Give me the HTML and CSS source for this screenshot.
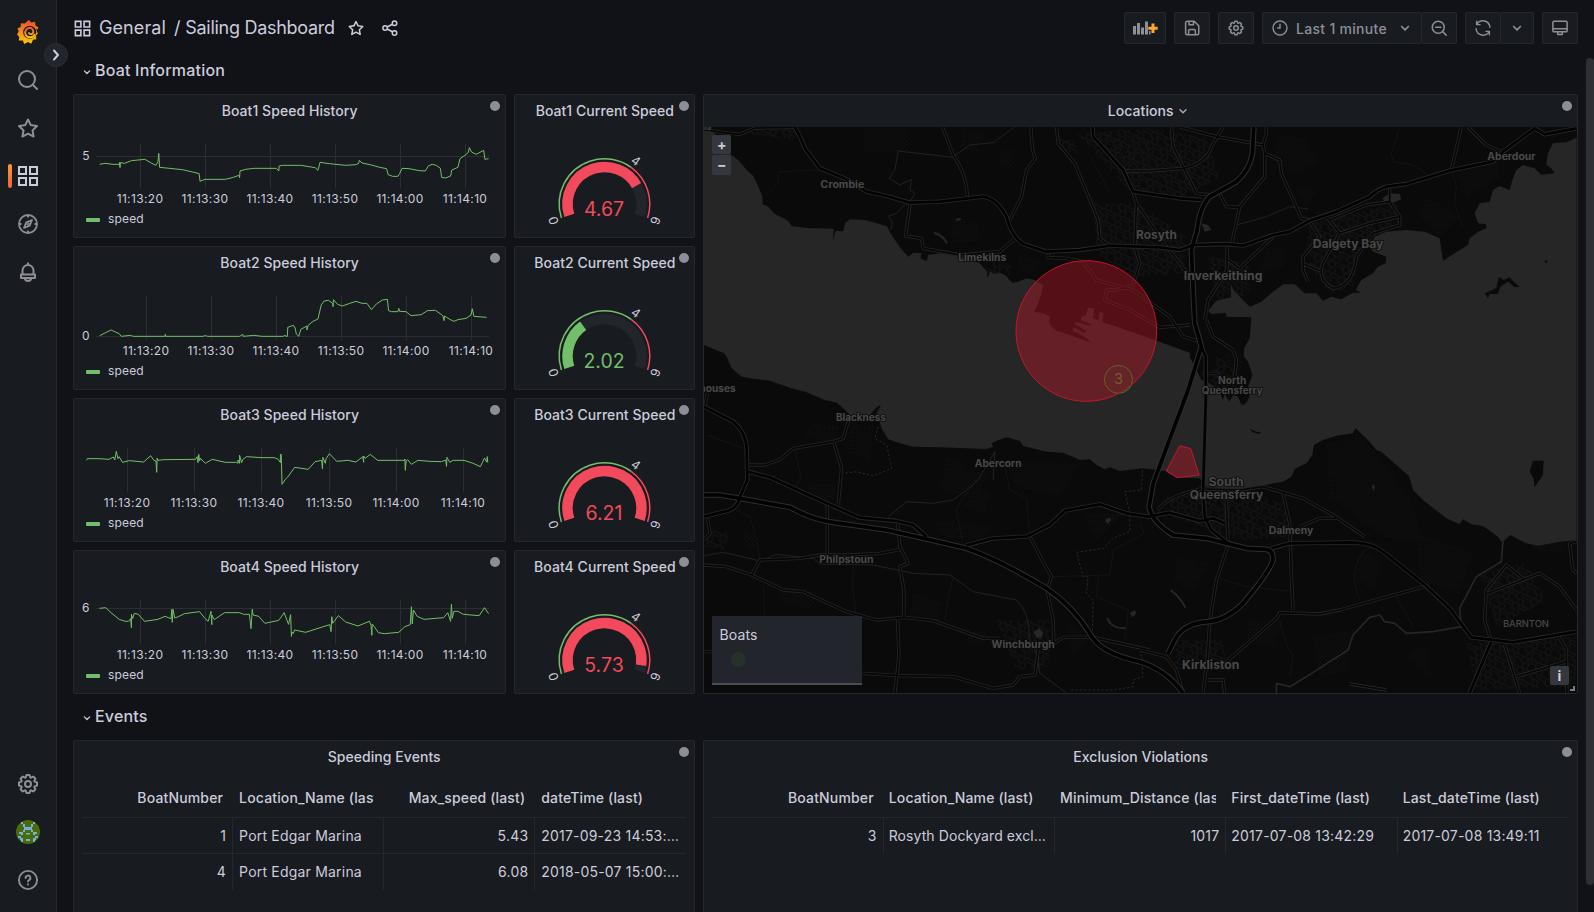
FILE: index.html
```html
<!DOCTYPE html>
<html lang="en">
<head>
<meta charset="utf-8">
<title>Sailing Dashboard</title>
<link rel="stylesheet" href="styles.css">
</head>
<body>
<svg class="defs" width="0" height="0">
  <defs>
    <symbol id="i-apps" viewBox="0 0 24 24"><path fill="none" stroke="currentColor" stroke-width="2" d="M3 3h7v7H3zM14 3h7v7h-7zM3 14h7v7H3zM14 14h7v7h-7z"/></symbol>
    <symbol id="i-star" viewBox="0 0 24 24"><path fill="currentColor" d="M22,9.67A1,1,0,0,0,21.14,9l-5.69-.83L12.9,3a1,1,0,0,0-1.8,0L8.55,8.16,2.86,9a1,1,0,0,0-.81.68,1,1,0,0,0,.25,1l4.13,4-1,5.68A1,1,0,0,0,6.9,21.44L12,18.77l5.1,2.67a.93.93,0,0,0,.46.12,1,1,0,0,0,.59-.19,1,1,0,0,0,.4-1l-1-5.68,4.13-4A1,1,0,0,0,22,9.67Zm-6.15,4a1,1,0,0,0-.29.88l.72,4.2-3.76-2a1.06,1.06,0,0,0-.94,0l-3.76,2,.72-4.2a1,1,0,0,0-.29-.88l-3-3,4.21-.61a1,1,0,0,0,.76-.55L12,5.7l1.88,3.82a1,1,0,0,0,.76.55l4.21.61Z"/></symbol>
    <symbol id="i-gear" viewBox="0 0 24 24"><path fill="currentColor" d="M21.32,9.55l-1.89-.63.89-1.78A1,1,0,0,0,20.13,6L18,3.87a1,1,0,0,0-1.15-.19l-1.78.89-.63-1.89A1,1,0,0,0,13.5,2h-3a1,1,0,0,0-.95.68L8.92,4.57,7.14,3.68A1,1,0,0,0,6,3.87L3.87,6a1,1,0,0,0-.19,1.15l.89,1.78-1.89.63A1,1,0,0,0,2,10.5v3a1,1,0,0,0,.68.95l1.89.63-.89,1.78A1,1,0,0,0,3.87,18L6,20.13a1,1,0,0,0,1.15.19l1.78-.89.63,1.89a1,1,0,0,0,.95.68h3a1,1,0,0,0,.95-.68l.63-1.89,1.78.89A1,1,0,0,0,18,20.13L20.13,18a1,1,0,0,0,.19-1.15l-.89-1.78,1.89-.63A1,1,0,0,0,22,13.5v-3A1,1,0,0,0,21.32,9.55ZM20,12.78l-1.2.4A2,2,0,0,0,17.64,16l.57,1.14-1.1,1.1L16,17.64a2,2,0,0,0-2.79,1.16l-.4,1.2H11.22l-.4-1.2A2,2,0,0,0,8,17.64l-1.14.57-1.1-1.1L6.36,16A2,2,0,0,0,5.2,13.18L4,12.78V11.22l1.2-.4A2,2,0,0,0,6.36,8L5.79,6.89l1.1-1.1L8,6.36A2,2,0,0,0,10.82,5.2l.4-1.2h1.56l.4,1.2A2,2,0,0,0,16,6.36l1.14-.57,1.1,1.1L17.64,8a2,2,0,0,0,1.16,2.79l1.2.4ZM12,8a4,4,0,1,0,4,4A4,4,0,0,0,12,8Zm0,6a2,2,0,1,1,2-2A2,2,0,0,1,12,14Z"/></symbol>
    <symbol id="i-down" viewBox="0 0 24 24"><path fill="none" stroke="currentColor" stroke-width="2.2" stroke-linecap="round" stroke-linejoin="round" d="M7.5 10l4.5 4.5 4.5-4.5"/></symbol>
  </defs>
</svg>

<nav class="sidebar">
  <div class="nav-group">
    <a class="nav-item logo"><svg width="24" height="26" viewBox="0 0 24 26">
      <defs><linearGradient id="lg" x1="0" y1="0" x2="0" y2="1"><stop offset=".1" stop-color="#f05a28"/><stop offset="1" stop-color="#fbca0a"/></linearGradient></defs>
      <path fill="url(#lg)" d="M12.7 1l2.5 2.6 3.9-.8.4 3.6 3.1 2-1.3 2.3.8 3.6-2 2.3.2 3.6-3.3.5-1.8 4-3.2-1.7-3.8 2-1.3-3.4-4.1-.2.4-3.4L1 15.200l1.700-2.600L1.500 9.300l3.100-1.200.3-3.800 3.800.2z"/>
      <circle cx="13.700" cy="13.200" r="6.500" fill="#181b1f"/>
      <path fill="none" stroke="url(#lg)" stroke-width="1.900" stroke-linecap="round" d="M18.800 15.500a5.200 5.200 0 0 1-9.400-.4a4.900 4.900 0 0 1 4.400-6.300a4 4 0 0 1 3.500 4.500a2.400 2.400 0 0 1-4.300.8"/>
      <path fill="#181b1f" d="M20 9.500l3.500 2.500-2 2z"/>
    </svg></a>
    <a class="nav-item"><svg width="24" height="24" viewBox="0 0 24 24" fill="none" stroke="currentColor" stroke-width="2" stroke-linecap="round"><circle cx="11" cy="11" r="8"/><path d="M17 17l4 4"/></svg></a>
    <a class="nav-item"><svg width="24" height="24"><use href="#i-star"/></svg></a>
    <a class="nav-item active"><svg width="24" height="24"><use href="#i-apps"/></svg></a>
    <a class="nav-item"><svg width="24" height="24" viewBox="0 0 24 24" fill="none" stroke="currentColor" stroke-width="1.800" stroke-linejoin="round"><circle cx="12" cy="12" r="9"/><path d="M16 8l-2.300 5.700L8 16l2.300-5.700z"/><path d="M12 3v2.500M12 18.500V21M3 12h2.500M18.500 12H21M10.800 13.200l2.400-2.400"/></svg></a>
    <a class="nav-item"><svg width="24" height="24" viewBox="0 0 24 24" fill="none" stroke="currentColor" stroke-width="2" stroke-linejoin="round"><path d="M6.500 14v-3.500a5.500 5.500 0 0 1 11 0V14M12 5V2.500M5 14.500h14V18H5zM8.800 18.500a3.300 3.300 0 0 0 6.400 0"/></svg></a>
  </div>
  <div class="nav-group nav-bottom">
    <a class="nav-item"><svg width="24" height="24"><use href="#i-gear"/></svg></a>
    <a class="nav-item"><svg width="24" height="24" viewBox="0 0 24 24"><clipPath id="av"><circle cx="12" cy="12" r="12"/></clipPath><g clip-path="url(#av)"><path fill="#4d6a08" d="M0 0h24v24H0z"/><path fill="#6fb1e0" d="M5 2h2v2H5zM17 2h2v2h-2zM7 4h2v3H7zM15 4h2v3h-2zM8 7h8v3H8zM7 10h2v2H7zM15 10h2v2h-2zM3 12h4v3H5v-1H3zM17 12h4v2h-2v1h-2zM10 13h4v1.500h-4zM2 16h3v2h2v2H4v-2H2zM19 16h3v2h-2v2h-3v-2h2zM5 20h2v2H5zM17 20h2v2h-2zM10 19h4v2h-4z"/></g></svg></a>
    <a class="nav-item"><svg width="24" height="24" viewBox="0 0 24 24" fill="none" stroke="currentColor" stroke-width="1.900" stroke-linecap="round"><circle cx="12" cy="12" r="9.100"/><path d="M9.600 10a2.400 2.400 0 1 1 3.500 2.100q-1.100.6-1.100 1.400M12 16.300v.3"/></svg></a>
  </div>
  <span class="nav-toggle"><svg width="24" height="24" viewBox="0 0 24 24" fill="none" stroke="#ccccdc" stroke-width="2" stroke-linecap="round" stroke-linejoin="round"><path d="M10 7.500l4 4.500-4 4.500"/></svg></span>
</nav>

<main class="main">
  <header class="topbar">
    <div class="crumbs">
      <svg class="ic-apps" width="19" height="19"><use href="#i-apps"/></svg>
      <span class="crumb folder">General</span><span class="crumb sep">/</span><span class="crumb">Sailing Dashboard</span>
      <svg class="ic-star" width="18" height="18"><use href="#i-star"/></svg>
      <svg class="ic-share" width="18" height="18" viewBox="0 0 24 24" fill="none" stroke="currentColor" stroke-width="2"><circle cx="5.500" cy="12" r="3"/><circle cx="18" cy="5.500" r="3"/><circle cx="18" cy="18.500" r="3"/><path d="M8.200 10.700l7-3.700M8.200 13.300l7 3.700"/></svg>
    </div>
    <div class="tools">
      <button class="btn add"><svg width="26" height="16" viewBox="0 0 26 16"><path fill="#8e8e99" d="M1 6h3v8.500H1zM5 3h3v11.500H5zM9 7.500h3v7H9zM13 1.500h3v13h-3z"/><path fill="#8e8e99" d="M17 11h1.500v3.500H17z"/><path fill="#ffa630" d="M19.500 3.500h3v3.200h3.200v3h-3.200v3.200h-3V9.700h-3.200v-3h3.200z"/></svg></button>
      <button class="btn"><svg width="18" height="18" viewBox="0 0 24 24" fill="none" stroke="currentColor" stroke-width="2" stroke-linejoin="round"><path d="M3.500 5a2 2 0 0 1 2-2H15l6 6v10a2 2 0 0 1-2 2H5.500a2 2 0 0 1-2-2zM8 3v4.500h6V3.500M7.500 21v-5.500a1.500 1.500 0 0 1 1.500-1.500h6a1.500 1.500 0 0 1 1.500 1.500V21"/></svg></button>
      <button class="btn"><svg width="18" height="18"><use href="#i-gear"/></svg></button>
      <div class="btn-group">
        <button class="btn time"><svg width="18" height="18" viewBox="0 0 24 24" fill="none" stroke="currentColor" stroke-width="1.900" stroke-linecap="round"><circle cx="12" cy="12" r="9.300"/><path d="M12 7v5H9"/></svg><span>Last 1 minute</span><svg width="18" height="18"><use href="#i-down"/></svg></button>
        <button class="btn"><svg width="18" height="18" viewBox="0 0 24 24" fill="none" stroke="currentColor" stroke-width="2" stroke-linecap="round"><circle cx="11" cy="11" r="8"/><path d="M17 17l4.500 4.500M7.500 11h7"/></svg></button>
      </div>
      <div class="btn-group">
        <button class="btn"><svg width="18" height="18" viewBox="0 0 24 24" fill="none" stroke="currentColor" stroke-width="1.900" stroke-linecap="round" stroke-linejoin="round"><path d="M3.500 3v4.500H8M3.800 7.300A9.300 9.300 0 0 1 21.200 11M20.500 21v-4.500H16M20.200 16.700A9.300 9.300 0 0 1 2.800 13"/></svg></button>
        <button class="btn arrow"><svg width="18" height="18"><use href="#i-down"/></svg></button>
      </div>
      <button class="btn"><svg width="18" height="18" viewBox="0 0 24 24" fill="none" stroke="currentColor" stroke-width="2" stroke-linejoin="round"><path d="M2.500 4.500a1.500 1.500 0 0 1 1.500-1.500h16a1.500 1.500 0 0 1 1.500 1.500v11a1.500 1.500 0 0 1-1.500 1.500H4a1.500 1.500 0 0 1-1.500-1.500zM2.500 13h19M9 17v3.500h6V17"/></svg></button>
    </div>
  </header>

  <div class="grid">
    <h2 class="row-title"><svg width="14" height="14"><use href="#i-down"/></svg>Boat Information</h2>

    <section class="panel history r1"><h3>Boat1 Speed History</h3><i class="dot"></i>
      <svg class="plot" viewBox="74 127 431 78">
        <path class="gl" d="M140.500 143.500V188.500M205.500 143.500V188.500M270.500 143.500V188.500M335.500 143.500V188.500M400.500 143.500V188.500M465.500 143.500V188.500M96 156.500H489"/>
        <g class="ln" transform="translate(60 90) scale(.40816 .33333)"><path d="M97 223L110 220L130 223L146 223V217L147 233L148 218L158 220L175 212L208 208L225 220L235 226L240 215L242 190L244 232L260 234L300 239L325 246L341 251L343 274L355 268H405L425 262L438 256L440 263L441 243L455 238L475 235H530L536 243L537 228L545 226H590L625 233L632 241L637 217L660 221L700 226L725 224L732 220L733 211L740 219L760 224L780 231L800 236L804 254L815 259H828L832 251L838 235L855 236L880 242L895 243L903 227L912 223L922 226L932 235L935 262L945 264L957 258L960 240L975 232L980 206L992 196L1000 188L1003 173L1008 186L1020 193L1038 181L1041 208L1050 206"/></g>
        <g class="ax"><text x="140" y="203">11:13:20</text><text x="205" y="203">11:13:30</text><text x="270" y="203">11:13:40</text><text x="335" y="203">11:13:50</text><text x="400" y="203">11:14:00</text><text x="465" y="203">11:14:10</text><text x="86" y="160">5</text></g>
      </svg><div class="legend"><i></i>speed</div></section>
    <section class="panel gauge r1"><h3>Boat1 Current Speed</h3><i class="dot"></i>
      <svg viewBox="514.500 127 180 110"><g transform="translate(604 204) rotate(162)" fill="none"><circle r="37" class="gb" pathLength="360" stroke-dasharray="216 360"/><circle r="37" class="gr" pathLength="360" stroke-dasharray="168.100 360"/><circle r="45.300" class="tg" pathLength="360" stroke-dasharray="144 360"/><circle r="45.300" class="tr" pathLength="360" stroke-dasharray="72 360" transform="rotate(144)"/></g>
      <g class="gt" transform="translate(604 204)"><text transform="rotate(-108)" y="-49">0</text><text transform="rotate(36)" y="-49">4</text><text transform="rotate(108)" y="-49">6</text></g><text class="gv red" x="603.500" y="216">4.67</text></svg></section>

    <section class="panel history r2"><h3>Boat2 Speed History</h3><i class="dot"></i>
      <svg class="plot" viewBox="74 279 431 78">
        <path class="gl" d="M146.500 295.500V340.500M211.500 295.500V340.500M276.500 295.500V340.500M341.500 295.500V340.500M406.500 295.500V340.500M471.500 295.500V340.500M96 336.500H489"/>
        <g class="ln" transform="translate(60 90) scale(.40816 .33333)"><path d="M97 737L125 720L145 731L150 739L172 736L180 739H257L258 733L259 739H350L356 737L362 739H440L448 733L449 739L475 736L495 739H548L551 735L553 739H557L558 712L572 706L576 714L579 732L585 739L590 718L605 708V720L608 706L620 694L632 687L640 645L647 633L658 631L668 640L669 650L670 629L680 643L692 648L710 640L725 634L740 640L752 640L763 659L775 642L790 630L802 628L805 662L812 665H828L830 655L832 664L848 665L860 677L885 674L900 662L920 661L938 677L941 692L942 678L955 688L965 694L975 689L995 685L1007 675L1010 656L1014 679L1045 682"/></g>
        <g class="ax"><text x="146" y="355">11:13:20</text><text x="211" y="355">11:13:30</text><text x="276" y="355">11:13:40</text><text x="341" y="355">11:13:50</text><text x="406" y="355">11:14:00</text><text x="471" y="355">11:14:10</text><text x="86" y="340">0</text></g>
      </svg><div class="legend"><i></i>speed</div></section>
    <section class="panel gauge r2"><h3>Boat2 Current Speed</h3><i class="dot"></i>
      <svg viewBox="514.500 127 180 110"><g transform="translate(604 204) rotate(162)" fill="none"><circle r="37" class="gb" pathLength="360" stroke-dasharray="216 360"/><circle r="37" class="gg" pathLength="360" stroke-dasharray="72.700 360"/><circle r="45.300" class="tg" pathLength="360" stroke-dasharray="144 360"/><circle r="45.300" class="tr" pathLength="360" stroke-dasharray="72 360" transform="rotate(144)"/></g>
      <g class="gt" transform="translate(604 204)"><text transform="rotate(-108)" y="-49">0</text><text transform="rotate(36)" y="-49">4</text><text transform="rotate(108)" y="-49">6</text></g><text class="gv green" x="603.500" y="216">2.02</text></svg></section>

    <section class="panel history r3"><h3>Boat3 Speed History</h3><i class="dot"></i>
      <svg class="plot" viewBox="74 431 431 78">
        <path class="gl" d="M127.500 447.500V492.500M194.500 447.500V492.500M261.500 447.500V492.500M329.500 447.500V492.500M396.500 447.500V492.500M463.500 447.500V492.500"/>
        <g class="ln" transform="translate(60 390) scale(.40816 .33333)"><path d="M65 211L67 206H95L120 208L131 201L134 210L138 184L142 206L145 200L153 217L170 212L205 216L222 197L230 211L235 213L237 247L238 204L240 211L255 209L332 208L336 200L338 218L340 193L342 213L344 205L356 220L373 208L405 217H432L436 220V210L440 220V196L445 218L448 208L457 200L495 203H525L535 208L540 218V193L542 193L544 283L552 268L558 261L575 232L608 238L625 215L641 211L643 236L644 202L650 220L652 206L660 191L678 214L705 211L725 216L742 200L744 217V198L748 205L760 193L778 211H845V207L846 241L848 213L852 209L861 223L877 211L905 214L935 215L945 210L947 229L948 202L955 217L963 211L990 211L1010 219L1030 230L1040 204L1045 216L1047 200L1048 218"/></g>
        <g class="ax"><text x="127" y="507">11:13:20</text><text x="194" y="507">11:13:30</text><text x="261" y="507">11:13:40</text><text x="329" y="507">11:13:50</text><text x="396" y="507">11:14:00</text><text x="463" y="507">11:14:10</text></g>
      </svg><div class="legend"><i></i>speed</div></section>
    <section class="panel gauge r3"><h3>Boat3 Current Speed</h3><i class="dot"></i>
      <svg viewBox="514.500 127 180 110"><g transform="translate(604 204) rotate(162)" fill="none"><circle r="37" class="gr" pathLength="360" stroke-dasharray="216 360"/><circle r="45.300" class="tg" pathLength="360" stroke-dasharray="144 360"/><circle r="45.300" class="tr" pathLength="360" stroke-dasharray="72 360" transform="rotate(144)"/></g>
      <g class="gt" transform="translate(604 204)"><text transform="rotate(-108)" y="-49">0</text><text transform="rotate(36)" y="-49">4</text><text transform="rotate(108)" y="-49">6</text></g><text class="gv red" x="603.500" y="216">6.21</text></svg></section>

    <section class="panel history r4"><h3>Boat4 Speed History</h3><i class="dot"></i>
      <svg class="plot" viewBox="74 583 431 78">
        <path class="gl" d="M140.500 599.500V644.500M205.500 599.500V644.500M270.500 599.500V644.500M335.500 599.500V644.500M400.500 599.500V644.500M465.500 599.500V644.500M96 608.500H489"/>
        <g class="ln" transform="translate(60 390) scale(.40816 .33333)"><path d="M97 655L112 653L125 668L145 688L160 694L168 694L173 686L175 713V673L178 686L182 670L192 673L207 694L240 688L257 679L272 686L274 658L275 697L277 658L281 684L290 680L305 671L342 665L355 685L363 694L370 664L372 704V675L378 689L403 668H440L450 673L464 673L468 716L471 658L473 675L487 679L502 700L536 691L549 668L560 703L565 674L567 739L568 726L571 731L575 720L602 727L640 712L661 704L664 725L666 680L668 700L682 677L700 696L730 708L758 694L762 706L764 736L765 702L770 710L780 728L795 731L830 727L845 710L858 704L861 650L863 702L866 660L875 679L892 688L940 683L950 668L957 694L959 643L961 685L965 664H975L988 673L1027 677L1040 653L1050 671"/></g>
        <g class="ax"><text x="140" y="659">11:13:20</text><text x="205" y="659">11:13:30</text><text x="270" y="659">11:13:40</text><text x="335" y="659">11:13:50</text><text x="400" y="659">11:14:00</text><text x="465" y="659">11:14:10</text><text x="86" y="612">6</text></g>
      </svg><div class="legend"><i></i>speed</div></section>
    <section class="panel gauge r4"><h3>Boat4 Current Speed</h3><i class="dot"></i>
      <svg viewBox="514.500 127 180 110"><g transform="translate(604 204) rotate(162)" fill="none"><circle r="37" class="gb" pathLength="360" stroke-dasharray="216 360"/><circle r="37" class="gr" pathLength="360" stroke-dasharray="206.300 360"/><circle r="45.300" class="tg" pathLength="360" stroke-dasharray="144 360"/><circle r="45.300" class="tr" pathLength="360" stroke-dasharray="72 360" transform="rotate(144)"/></g>
      <g class="gt" transform="translate(604 204)"><text transform="rotate(-108)" y="-49">0</text><text transform="rotate(36)" y="-49">4</text><text transform="rotate(108)" y="-49">6</text></g><text class="gv red" x="603.500" y="216">5.73</text></svg></section>

    <section class="panel map"><h3><span class="menu-title">Locations<svg width="16" height="16"><use href="#i-down"/></svg></span></h3><i class="dot"></i>
      <div class="canvas">
      <svg class="mapsvg" viewBox="12 111 2619 1698" preserveAspectRatio="none">
        <defs>
          <pattern id="wood" width="12" height="12" patternUnits="userSpaceOnUse"><path fill="#181818" d="M0 0h3v3H0zM6 6h3v3H6z"/></pattern>
          <pattern id="town" width="46" height="34" patternUnits="userSpaceOnUse" patternTransform="rotate(24)"><path fill="none" stroke="#161616" stroke-width="3" d="M0 2H46M4 2V20H30V34M22 2V12H46M14 20V34"/></pattern>
          <g id="majors">
            <path d="M285 111L300 140L315 175L360 235L440 268L500 305L560 318L630 338L720 335L850 320Q890 325 920 380Q935 440 970 462L1040 485L1140 480L1230 467L1380 472L1440 480L1480 465L1580 462L1630 467L1720 435L1770 425L1830 392L1910 365L2010 320Q2030 300 2060 290L2120 282L2250 242L2380 215L2410 185L2505 115L2535 133L2631 115"/>
            <path d="M12 950L100 995Q140 1030 140 1080L142 1170L118 1225Q115 1250 85 1262L12 1280"/>
            <path d="M145 1145L210 1162L380 1240L480 1283L590 1293L640 1305L680 1340"/>
            <path d="M800 1366L880 1345L980 1340L1050 1305L1095 1262L1200 1243L1280 1270L1345 1280L1410 1268L1500 1293L1540 1285L1575 1300"/>
            <path d="M1715 1375L1770 1360L1960 1357Q2020 1360 2050 1385L2170 1480L2250 1555L2315 1642L2440 1657L2631 1625"/>
            <path d="M2375 1655L2310 1809M1178 111L1180 140L1270 240L1300 305L1440 325L1505 330"/>
            <path d="M1505 770L1518 800V930L1510 1200L1515 1280L1535 1320L1585 1360"/>
          </g>
          <g id="motor">
            <path d="M1662 111L1658 190Q1650 240 1610 275L1530 320Q1500 350 1492 420L1475 480L1480 600L1485 700L1505 770L1465 900L1360 1180L1348 1250Q1355 1295 1420 1335L1520 1345L1640 1375L1700 1378Q1720 1380 1720 1410Q1710 1445 1630 1540Q1580 1590 1525 1595Q1450 1600 1425 1650L1405 1690"/>
            <path d="M12 1215H60L120 1225L270 1252Q340 1290 400 1297L560 1320L680 1347L800 1375Q900 1410 1040 1495Q1120 1550 1170 1630Q1200 1690 1320 1715Q1400 1740 1450 1809"/>
          </g>
          <g id="minors">
            <path d="M12 118L70 128L120 133L165 114L280 112M728 111L760 195Q800 250 803 320M993 111L998 180L1007 205L980 240L965 320L930 390M1070 111L1075 160L1125 220L1195 390L1200 445L1225 465M630 345L617 438L665 445L670 475L780 495L900 485L940 450M1270 243H1350L1450 235Q1520 220 1535 170L1570 111M1300 305L1310 340L1305 470L1320 520L1300 585L1250 600M1045 490V503L1100 505L1150 515L1190 570L1300 600L1410 680L1450 740L1500 755M1250 600H1220L1215 630L1290 660L1380 712L1470 705M1310 340L1400 470L1460 545"/>
            <path d="M1415 111L1420 170L1490 310L1535 315L1560 300M1440 111L1550 140L1690 165L1700 130V111M1690 165L1695 190L1740 210L1745 250L1805 385L1830 390M1695 190V260L1620 350L1595 465L1582 462V540L1525 630L1515 690M1560 310L1580 350L1620 352M1720 440L1620 535L1585 510M2285 111L2255 240M2305 111L2360 165L2405 185M2070 290V335L2100 380L2010 400L1920 430L1885 385M1890 390L2000 345L2070 335M1830 395L1860 440L1810 500V540L1825 575M1812 522L1860 542M1920 430L1880 500Q1840 560 1900 595Q1960 590 1970 500L2020 430L2100 405V380M1520 690L1540 740L1600 780L1610 810L1605 860M1505 850H1550L1565 870"/>
            <path d="M145 1125H195L240 1108L280 1075L400 1055L430 1045L445 995M402 1058L425 1135L415 1245M382 1245V1400M593 1300L600 1370L625 1420L600 1430L612 1500V1580M12 1425L80 1430L155 1455L250 1500L310 1505L440 1565L530 1590L615 1582L700 1592L850 1645H900M155 1455L180 1410L300 1405L360 1395L450 1395L540 1390L600 1378M593 1585L597 1700L585 1809M990 1340L1035 1425L1055 1460L1042 1500L1060 1590L1062 1660L1090 1642H1180L1350 1680M490 1750L600 1757L760 1760L880 1795L940 1785L960 1760L1005 1755L1015 1680M12 1685H60M22 910L15 950M22 1283L30 1330L12 1350"/>
            <path d="M1585 1365L1550 1470L1530 1595L1523 1700L1510 1809M1585 1360L1578 1200M1750 1210L1770 1300L1775 1460L1780 1560M1375 1260Q1400 1220 1500 1197L1620 1200L1690 1190L1810 1225L1900 1275L1995 1340M1800 1310L1860 1285L1910 1285M1580 1715L1730 1585L1740 1568L1860 1572L1920 1560L2100 1510L2190 1485M2415 1665L2460 1809M2375 1655L2355 1590L2360 1500L2420 1425L2470 1465M2360 1512L2520 1450L2580 1490L2631 1560M2600 1715L2450 1760M2575 1635L2600 1680L2602 1809M2631 1355L2610 1360L2620 1440L2631 1450M1950 1782L2060 1800M1320 1680L1400 1700L1430 1740L1450 1809M1525 1770H1570L1575 1809"/>
          </g>
        </defs>
        <path fill="#0a0a0a" d="M0 100h2640v1720H0z"/>
        <g fill="url(#wood)">
          <path d="M490 115h140v70H490zM790 120l60 10-20 60-50-20zM1220 150l130-10 10 100-110-10zM900 180h40v50h-40zM750 380l80 20 20 50-90 10zM430 440l60 20-20 30-60-10zM960 500l60 10-20 40-40-10zM1740 130l80 20 40 70-80 30-60-40zM1790 290l60 10-30 60zM2180 320l100 60-60 60-60-60zM1700 470l60 0-10 60-70 20zM1580 790l50 0-10 50-50-10zM2270 250l120-40 10 50-100 60z"/>
          <path d="M340 1000l80 10-20 50-90-20zM450 1000l70 10-10 100-60-20zM740 1100l130 60-60 60-90-20zM920 1110l220 10-60 100-130-30zM330 1180l80 0-10 50-80-10zM830 1190l50 20-30 60-60-20zM700 1290l180 20-30 40-120-10zM1150 1270l120 0-80 80zM230 1480l120 30-20 50-80-20zM640 1510l90 30-20 50-80-20zM800 1620l60 10-20 40-40-10zM1100 1590l60 60-40 60zM120 1320l60 20-30 50z"/>
          <path d="M1880 1060l110-20 140 180 40 140-120-20-160-120zM2150 1330l170 60-40 120-120-40zM1430 1400l100 20-50 90-60-40zM1840 1640l120-20-20 120-80 20zM2120 1700l60-40 20 120zM1650 1590l100 10-30 70-80-20zM1980 1380l70 40-30 80-50-30zM2480 1290l130 20-20 80-90-10z"/>
        </g>
        <g fill="url(#town)">
          <path d="M1130 130l220-15 170 30 40 120-120 60-160-30-70-80zM1180 340l130 0 150 100-10 110-150 10-110-70zM1520 500l130 20 0 90-90 40zM1830 400l260-60 20 60-130 70-20 120-70 20-60-80-10-80zM1060 130l70 30 0 50z"/>
          <path d="M1400 1220l180-20 180 40 10 100-150 10-200-70zM1430 1650l140 0 10 90-160 0zM890 1590l160 0 0 140-100 10zM2300 1660l330-20 0 150-300 10zM2340 1450l140-30 60 110-150 80zM30 1320l60 10-20 50-60-10zM130 130l70-20 100 10-20 30zM850 500l90 30-20 40-60-20zM1550 790l80 80-40 40-60-20z"/>
        </g>
        <path class="water" d="M12 120L40 125L60 150L95 195L115 210L140 240L160 258L175 290L187 318L188 343L205 350L222 370L265 393L275 408L320 414L402 416L398 452L408 422L430 424L436 398L450 388L495 390L560 408L575 435L600 472L625 500L640 488L665 490L662 505L680 514L685 495L720 490L770 498L800 505L840 520L862 545V565L872 545L885 552L900 548L915 555L938 578L955 575L980 565L1005 570L1030 585L1025 610L1015 640L1003 665L1030 670L1050 680L1048 700L1065 720L1110 735L1175 758L1150 738L1118 722L1122 712L1155 730L1158 722L1123 702L1128 696L1172 707L1174 703L1143 692L1145 680L1158 675L1165 652L1175 655L1183 655L1180 685L1195 690L1200 665L1212 670L1207 695L1350 745L1470 788V800L1485 830L1505 870L1530 880L1560 905L1570 930L1575 910L1588 935L1600 915L1615 920L1625 945L1640 925L1650 925L1645 890L1658 855L1645 815L1632 800L1633 775L1650 745L1655 682L1580 680L1578 668L1535 672L1525 662L1550 632L1595 622L1592 580L1605 605L1650 650L1685 635L1720 605L1750 583H1785L1815 610H1850L1870 632L1895 620L1925 628L1960 608H1985L1968 600L1985 570L2020 550L2035 530L2058 520L2060 500L2020 485L2010 470L2025 440L2060 425L2120 420L2175 425L2220 445L2225 480L2230 512L2265 490L2305 465L2310 445L2335 425L2360 415V403L2335 400L2325 370L2340 340L2370 335L2380 300L2400 288L2430 300L2440 265L2450 240L2470 225L2505 235L2525 254L2565 250L2555 235L2540 225L2545 190L2560 160L2600 157L2631 143V1350L2580 1355L2515 1367L2480 1360L2432 1335L2415 1350L2408 1358L2395 1340L2350 1308L2315 1303L2290 1288L2280 1303L2240 1285L2170 1230L2140 1200L2128 1158L2090 1125L2045 1085L2030 1080L2010 1055L1968 1015L1960 1030L1910 1037L1870 1050L1842 1065L1838 1095L1820 1120L1785 1137L1775 1160L1750 1175L1695 1185L1665 1195L1620 1200L1520 1190L1500 1165L1430 1163L1395 1143L1330 1135L1260 1143L1230 1132L1215 1138L1190 1125L1170 1108L1140 1110L1090 1088L1040 1085L970 1068L960 1053L920 1042L890 1052L875 1060L880 1070L860 1077L720 1072L640 1070L600 1060L565 1048L545 1015L540 1000L528 975L543 945L530 952L510 975L490 980L450 975L430 955L410 938L375 930L320 907L270 893L210 872L150 865L125 860L95 835L80 800L72 790L12 765Z"/>
        <g class="water"><path d="M2048 325L2070 310 2100 312 2105 328 2080 338 2055 335zM1505 400l20 5 10 15-20 5zM766 388l15-5 3 6-12 5zM1000 1625l20-10 10 15-5 15-15-3zM1215 1290l15-8 5 8-12 12zM1290 1570l15-10 5 10-12 12zM2016 1190l4-8 6 8-4 14zM1670 705l20-8 5 8-20 8z"/><path d="M702 428Q730 435 741 460M1412 1500Q1440 1520 1457 1553M1222 1584Q1235 1618 1278 1614" fill="none" stroke="#262626" stroke-width="6"/></g>
        <g fill="#0a0a0a"><path d="M2355 610L2390 595L2398 560L2412 570L2430 562L2440 573L2460 590L2445 592L2425 575L2402 590L2395 612L2370 612L2365 625zM2500 1112H2532L2530 1155L2505 1192L2502 1165L2490 1145zM1650 1017l20 8 15 2-8 4-18-4zM2536 512l7 0 0 6-7 0zM1610 905l30 5 6 20-14 16-12-20z"/></g>
        <g class="river"><path d="M2410 1355L2405 1415L2330 1460L2280 1555L2285 1610L2200 1625L2120 1630L2085 1600L2055 1595L2040 1575L2010 1582L1960 1635L1945 1680L1820 1760L1770 1790L1730 1780V1809"/></g>
        <g class="thin"><path d="M760 200L810 165L880 158L945 111M760 202L595 183L585 240L568 265L600 285L635 268L630 300L645 310L630 335L608 350L590 370L566 378L578 400L572 420M880 1170L885 1085L835 1170L800 1200L760 1230L700 1240L620 1235L565 1280M12 1397L70 1387L180 1413L230 1393L340 1405L360 1422L520 1425L640 1450L750 1455L820 1505L950 1530Q990 1570 988 1640L1010 1690L1020 1750L1100 1809M1610 405L1700 380L1770 350L1825 357"/></g>
        <g class="faint"><path d="M200 315L232 280L238 245L360 240M110 1260L150 1280L170 1350L180 1410M190 1490L195 1590M285 1080L303 1160L280 1200M460 1430L458 1500L468 1570M760 1460L745 1520L735 1590M915 1130L930 1200L980 1225L990 1340M830 1170L768 1255L790 1365M1320 1300L1333 1330L1240 1380L1230 1455L1055 1460M1195 1460L1190 1520L1285 1560L1275 1650M2000 1375Q1940 1440 1980 1530M1560 1465L1640 1490L1770 1503M1740 1590Q1750 1650 1780 1700L1770 1760M2090 1520L2140 1610M2100 111L2075 190L2080 215L2140 225L2180 250M2260 250L2270 290L2265 340L2290 410M1170 200L1210 270L1230 310M20 1035L130 1075"/></g>
        <g class="trail"><path d="M535 1010L525 1045L560 1065L575 1135L520 1158L470 1145L430 1150M1328 1140L1325 1200L1275 1205L1290 1270V1325L1240 1345L1210 1375L1130 1387L1150 1460H1165L1160 1510L1180 1530L1178 1620M1323 1680L1330 1760L1300 1770V1790L1240 1800H1110"/></g>
        <use href="#minors" class="m1"/><use href="#minors" class="m2"/>
        <use href="#majors" class="a1"/><use href="#motor" class="w1"/><use href="#majors" class="a2"/><use href="#motor" class="w2"/>
        <g class="lbl" font-size="29">
          <text x="12" y="119" textLength="22" lengthAdjust="spacingAndGlyphs">ns</text>
          <text x="362" y="293" textLength="131" lengthAdjust="spacingAndGlyphs">Crombie</text>
          <text x="775" y="513" textLength="144" lengthAdjust="spacingAndGlyphs">Limekilns</text>
          <text x="-2" y="907" textLength="109" lengthAdjust="spacingAndGlyphs">houses</text>
          <text x="408" y="992" textLength="150" lengthAdjust="spacingAndGlyphs">Blackness</text>
          <text x="825" y="1131" textLength="140" lengthAdjust="spacingAndGlyphs">Abercorn</text>
          <text x="358" y="1418" textLength="163" lengthAdjust="spacingAndGlyphs">Philpstoun</text>
          <text x="875" y="1674" textLength="190" lengthAdjust="spacingAndGlyphs">Winchburgh</text>
          <text x="2363" y="211" textLength="145" lengthAdjust="spacingAndGlyphs">Aberdour</text>
          <text x="1555" y="881" textLength="85" lengthAdjust="spacingAndGlyphs">North</text>
          <text x="1506" y="912" textLength="183" lengthAdjust="spacingAndGlyphs">Queensferry</text>
          <text x="1707" y="1331" textLength="134" lengthAdjust="spacingAndGlyphs">Dalmeny</text>
          <text x="2410" y="1610" textLength="138" lengthAdjust="spacingAndGlyphs" class="district">BARNTON</text>
          <g font-size="35"><text x="1309" y="446" textLength="122" lengthAdjust="spacingAndGlyphs">Rosyth</text>
          <text x="1839" y="474" textLength="212" lengthAdjust="spacingAndGlyphs">Dalgety Bay</text>
          <text x="1452" y="571" textLength="236" lengthAdjust="spacingAndGlyphs">Inverkeithing</text>
          <text x="1526" y="1188" textLength="106" lengthAdjust="spacingAndGlyphs">South</text>
          <text x="1470" y="1226" textLength="220" lengthAdjust="spacingAndGlyphs">Queensferry</text>
          <text x="1447" y="1738" textLength="172" lengthAdjust="spacingAndGlyphs">Kirkliston</text></g>
        </g>
        <g class="boat"><circle cx="1256" cy="868" r="42"/><text x="1256" y="882">3</text></g>
        <g class="zone"><circle cx="1159.500" cy="723" r="211"/><path d="M1440 1067L1473 1076L1498 1155L1432 1163L1400 1143z"/></g>
      </svg>
      <div class="zoomctl"><button>+</button><button>−</button></div>
      <div class="maplegend">Boats<i></i></div>
      <button class="attrib">i</button>
      <i class="grip"></i>
      </div>
    </section>

    <h2 class="row-title ev"><svg width="14" height="14"><use href="#i-down"/></svg>Events</h2>

    <section class="panel t1"><h3>Speeding Events</h3><i class="dot"></i>
      <table><thead><tr><th class="n"><div>BoatNumber</div></th><th><div>Location_Name (last)</div></th><th class="n"><div>Max_speed (last)</div></th><th><div>dateTime (last)</div></th></tr></thead>
      <tbody><tr><td class="n">1</td><td>Port Edgar Marina</td><td class="n">5.43</td><td>2017-09-23 14:53:00</td></tr>
      <tr><td class="n">4</td><td>Port Edgar Marina</td><td class="n">6.08</td><td>2018-05-07 15:00:00</td></tr></tbody></table></section>
    <section class="panel t2"><h3>Exclusion Violations</h3><i class="dot"></i>
      <table><thead><tr><th class="n"><div>BoatNumber</div></th><th><div>Location_Name (last)</div></th><th class="n"><div>Minimum_Distance (last)</div></th><th><div>First_dateTime (last)</div></th><th><div>Last_dateTime (last)</div></th></tr></thead>
      <tbody><tr><td class="n">3</td><td class="tight">Rosyth Dockyard exclusion</td><td class="n">1017</td><td>2017-07-08 13:42:29</td><td>2017-07-08 13:49:11</td></tr></tbody></table></section>
  </div>
</main>
<div class="scrollbar"></div>
</body>
</html>
```
FILE: styles.css
```css
* { box-sizing: border-box; }
html, body { height: 100%; overflow: hidden; }
body { margin: 0; display: flex; background: #111217; color: #ccccdc; font-family: Inter, "Liberation Sans", sans-serif; font-size: 14px; letter-spacing: .15px; }
svg { display: block; flex: none; }
.defs { position: absolute; }
button { font: inherit; letter-spacing: inherit; color: inherit; margin: 0; padding: 0; border: 0; background: none; }

.sidebar { position: relative; width: 57px; flex: none; height: 912px; background: #181b1f; border-right: 1px solid #25272c; display: flex; flex-direction: column; justify-content: space-between; padding: 8px 0; color: #8e8e99; }
.nav-item { display: flex; height: 48px; align-items: center; justify-content: center; position: relative; }
.nav-item.active { color: #ccccdc; }
.nav-item.active::before { content: ""; position: absolute; left: 8px; top: 12px; width: 4px; height: 24px; border-radius: 2px; background: linear-gradient(#ff9830, #f55f3e); }
.nav-toggle { position: absolute; left: 44px; top: 43px; width: 24px; height: 24px; border-radius: 50%; background: #22252b; border: 1px solid #2c2e34; z-index: 2; display: flex; align-items: center; justify-content: center; }

.main { flex: 1; min-width: 0; height: 912px; overflow: hidden; padding: 0 16px; display: flex; flex-direction: column; }
.topbar { height: 56px; flex: none; display: flex; justify-content: space-between; align-items: center; }
.crumbs { display: flex; align-items: center; font-size: 18px; letter-spacing: -.28px; height: 28px; }
.ic-apps { margin: 0 7px 0 0; }
.crumb { white-space: nowrap; margin-top: -1px; }
.crumb.folder { letter-spacing: .1px; }
.crumb.sep { margin: -1px 5px 0 8px; }
.ic-star { margin-left: 12px; }
.ic-share { margin-left: 16px; }
.tools { display: flex; gap: 8px; color: #8e8e99; }
.btn { width: 36px; height: 32px; background: #181b1f; border: 1px solid #25272c; border-radius: 2px; display: flex; align-items: center; justify-content: center; font-weight: 500; }
.btn.add { width: 42px; }
.btn-group { display: flex; }
.btn-group .btn + .btn { margin-left: -1px; }
.btn.time { width: 160px; justify-content: flex-start; padding-left: 8px; letter-spacing: .3px; }
.btn.time span { margin: 0 9px 0 7px; }
.btn.arrow { width: 34px; }

.grid { flex: 1; min-height: 0; display: grid; grid-template-columns: repeat(24, minmax(0, 1fr)); grid-template-rows: repeat(18, 30px) minmax(0, 1fr); gap: 8px; }
.row-title { grid-column: 1 / -1; grid-row: 1; margin: 0; display: flex; align-items: center; font-size: 16px; font-weight: 500; letter-spacing: .2px; padding: 0 0 2px 7px; }
.row-title svg { margin: 3px 1px 0 0; }
.row-title.ev { grid-row: 18; }
.panel { background: #181b1f; border: 1px solid #25272c; border-radius: 2px; position: relative; overflow: hidden; display: flex; flex-direction: column; }
.panel h3 { margin: 0; height: 32px; flex: none; text-align: center; font-size: 14px; font-weight: 500; letter-spacing: .05px; line-height: 32px; white-space: nowrap; }
.dot { position: absolute; right: 5px; top: 6px; width: 10px; height: 10px; border-radius: 50%; background: #8e8e99; }
.history { grid-column: 1 / span 7; }
.gauge { grid-column: 8 / span 3; }
.r1 { grid-row: 2 / span 4; }
.r2 { grid-row: 6 / span 4; }
.r3 { grid-row: 10 / span 4; }
.r4 { grid-row: 14 / span 4; }
.map { grid-column: 11 / -1; grid-row: 2 / span 16; }
.t1, .t2 { grid-row: 19; border-bottom: 0; border-radius: 2px 2px 0 0; }
.t1 { grid-column: 1 / span 10; }
.t2 { grid-column: 11 / -1; }

.plot { width: 431px; height: 78px; }
.gl { stroke: #2b2e32; fill: none; }
.ln path { fill: none; stroke: #73bf69; stroke-width: 1; vector-effect: non-scaling-stroke; }
.ax { font-size: 12px; letter-spacing: .35px; fill: #ccccdc; text-anchor: middle; }
.legend { display: flex; align-items: center; font-size: 12px; height: 20px; padding: 2px 0 0 12px; margin-top: 2px; }
.legend i { width: 14px; height: 4px; border-radius: 1px; background: #73bf69; margin: 3px 8px 0 0; }

.gauge svg { width: 180px; height: 110px; }
.gb, .gr, .gg { stroke-width: 10.500; stroke: #22252b; }
.gr { stroke: #f2495c; }
.gg { stroke: #73bf69; }
.tg, .tr { stroke-width: 1.500; stroke: #73bf69; }
.tr { stroke: #f2495c; }
.gt { font-size: 12.500px; letter-spacing: 0; fill: #ccccdc; text-anchor: middle; }
.gv { font-size: 19.500px; letter-spacing: 0; text-anchor: middle; }
.red { fill: #f2495c; }
.green { fill: #73bf69; }

.menu-title { position: relative; }
.menu-title svg { position: absolute; left: 100%; top: 1px; margin-left: 1px; color: #a8a8b6; }
.canvas { position: relative; flex: 1; overflow: hidden; }
.mapsvg { width: 100%; height: 100%; }
.water { fill: #262626; }
.m1, .m2, .a1, .a2, .w1, .w2, .river, .thin, .faint, .trail { fill: none; stroke-linejoin: round; }
.m1 { stroke: #252525; stroke-width: 10; }
.m2 { stroke: #060606; stroke-width: 5; }
.a1 { stroke: #292929; stroke-width: 13; }
.a2 { stroke: #020202; stroke-width: 8; }
.w1 { stroke: #2e2e2e; stroke-width: 17; }
.w2 { stroke: #020202; stroke-width: 11; }
.river { stroke: #262626; stroke-width: 5; }
.thin { stroke: #222; stroke-width: 3; }
.faint { stroke: #161616; stroke-width: 2.500; }
.trail { stroke: #282828; stroke-width: 3; stroke-dasharray: 7 6; }
.lbl { font-family: Inter, sans-serif; font-weight: 700; letter-spacing: 0; fill: #494949; stroke: #0c0c0c; stroke-width: 5; paint-order: stroke; stroke-linejoin: round; }
.lbl .district { font-size: 28px; font-weight: 500; }
.boat circle { fill: rgba(55, 135, 45, .08); stroke: #37872d; stroke-width: 3; }
.boat text { fill: #3f8a38; font-size: 44px; text-anchor: middle; }
.zone { fill: rgba(196, 22, 42, .4); stroke: #c4162a; stroke-width: 3; }
.zoomctl { position: absolute; left: 8px; top: 8px; width: 19px; display: flex; flex-direction: column; gap: 1px; }
.zoomctl button { height: 19px; background: #34373d; border-radius: 2px; font-weight: 700; font-size: 14px; line-height: 19px; }
.zoomctl button + button { height: 20px; line-height: 18px; }
.maplegend { position: absolute; left: 8px; top: 489px; width: 150px; height: 69px; background: #22252b; border-bottom: 2px solid #4a4d56; padding: 10px 7px; line-height: 18px; }
.maplegend i { display: block; width: 15px; height: 15px; border-radius: 50%; background: #253229; margin: 8px 0 0 12px; }
.attrib { position: absolute; right: 8px; bottom: 8px; width: 19px; height: 19px; background: #34373d; border-radius: 2px; font-weight: 700; line-height: 19px; }
.grip { position: absolute; right: 2px; bottom: 2px; width: 5px; height: 5px; border-right: 2px solid #7b7c80; border-bottom: 2px solid #7b7c80; }

table { margin: 8px 8px 0; border-collapse: separate; border-spacing: 0; table-layout: fixed; width: calc(100% - 16px); }
th { font-weight: 500; text-align: left; height: 37px; padding: 0 10px 4px 6px; border-bottom: 1px solid #25272c; }
th div { overflow: hidden; white-space: nowrap; }
td { height: 36px; padding: 0 6px 1px; border-right: 1px solid #25272c; overflow: hidden; text-overflow: ellipsis; white-space: nowrap; letter-spacing: .2px; }
td.tight { letter-spacing: .08px; }
.t2 th, .t2 td { padding-left: 5px; }
td:last-child { border-right: 0; }
tr:not(:last-child) td { border-bottom: 1px solid #25272c; }
.n { text-align: right; }

.scrollbar { position: absolute; right: 0; top: 58px; width: 8px; height: 827px; border-radius: 4px; background: #2e2f34; }
```
